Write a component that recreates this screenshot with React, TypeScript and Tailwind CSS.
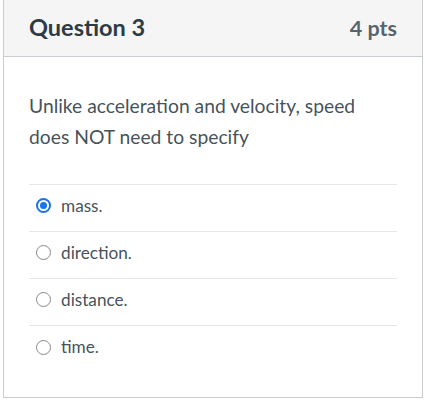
import React, { useState } from 'react';

const options = ['mass.', 'direction.', 'distance.', 'time.'];

export default function App() {
  const [selected, setSelected] = useState(0);

  return (
    <div className="w-[425px] h-[405px] bg-white font-['Lato','Liberation_Sans',sans-serif]">
      <div className="ml-[3px] w-[420px] h-[398px] border-x border-b border-[#c7cdd1]">
        <div className="h-[57px] bg-[#f5f5f5] border-b border-[#c7cdd1] flex items-center justify-between pl-[25px] pr-[25px]">
          <h2 className="text-[23.5px] font-bold text-[#2d3b45]">Question 3</h2>
          <span className="text-[21.5px] font-bold text-[#2d3b45]/80">4 pts</span>
        </div>
        <div className="px-[25px] pt-[33px]">
          <p className="text-[19.3px] leading-[31px] text-[#2d3b45]/90">
            Unlike acceleration and velocity, speed does NOT need to specify
          </p>
          <div className="mt-[32px] border-t border-[#e4e6e8]">
            {options.map((opt, i) => (
              <label
                key={opt}
                onClick={() => setSelected(i)}
                className={`flex items-center gap-[10px] h-[47px] pb-[5px] pl-[7px] cursor-pointer ${i < options.length - 1 ? 'border-b border-[#e4e6e8]' : ''}`}
              >
                {selected === i ? (
                  <span className="w-[15px] h-[15px] rounded-full border-[2px] border-[#1a73e8] flex items-center justify-center">
                    <span className="w-[7px] h-[7px] rounded-full bg-[#1a73e8]" />
                  </span>
                ) : (
                  <span className="w-[15px] h-[15px] rounded-full border border-[#8a8a8a]" />
                )}
                <span className="text-[17.2px] text-[#2d3b45]/90">{opt}</span>
              </label>
            ))}
          </div>
        </div>
      </div>
    </div>
  );
}
